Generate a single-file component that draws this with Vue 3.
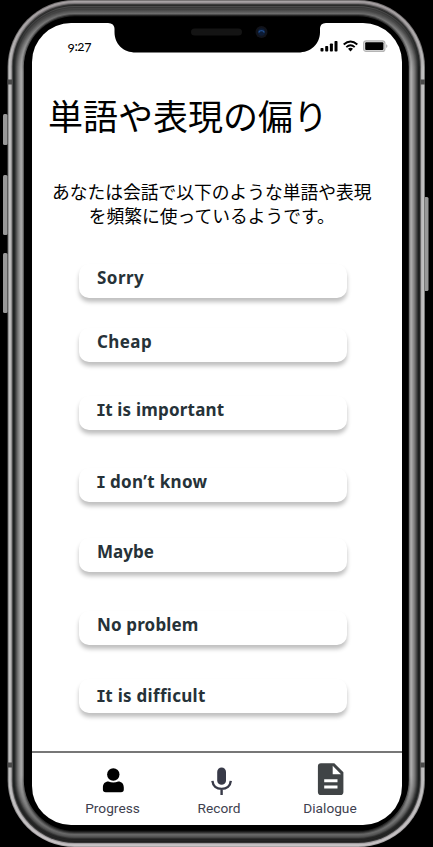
<script setup>
// Metal bands of the case, outermost first: inset, top, side and bottom shades
const bands = [
  [0, '#777374', '#777777', '#aaa6a8'],
  [1, '#a8a3a5', '#c2c2c2', '#c8c4c6'],
  [2, '#999496', '#bebebe', '#c2bec0'],
  [3, '#777375', '#b4b1b3', '#a19da0'],
  [4, '#3c3c3c', '#626262', '#333333'],
  [5, '#292929', '#222424', '#202020'],
  [6, '#4a4a4a', '#1d2020', '#252525'],
  [7, '#383838', '#323434', '#222222'],
  [8, '#444444', '#4a4a4a', '#303030'],
  [9, '#414141', '#626262', '#484848'],
  [10, '#4b4b4b', '#787878', '#565656'],
  [11, '#555555', '#8a8a8a', '#606060'],
  [12, '#5e5e5e', '#9a9a9a', '#656565'],
  [13, '#686868', '#aaaaaa', '#494949'],
  [14, '#454545', '#a0a0a0', '#292929'],
  [15, '#1b1b1b', '#777777', '#111111'],
  [16.2, '#000000', '#000000', '#000000']
].map(([inset, top, side, bottom]) => ({ inset, top, side, bottom }))

const phrases = [
  { lead: '', text: 'Sorry', kind: 'sorry' },
  { lead: '', text: 'Cheap', kind: 'cheap' },
  { lead: 'I', text: 't is important', kind: 'important' },
  { lead: 'I', text: ' don’t know', kind: 'unknown' },
  { lead: '', text: 'Maybe', kind: 'maybe' },
  { lead: '', text: 'No problem', kind: 'problem' },
  { lead: 'I', text: 't is difficult', kind: 'difficult' }
]
</script>

<template>
  <div class="phone">
    <svg class="case" viewBox="0 0 433 847" aria-hidden="true">
      <defs>
        <linearGradient v-for="(b, i) in bands" :id="'band' + i" :key="i" gradientUnits="userSpaceOnUse" x1="0" y1="0" x2="0" y2="847">
          <stop offset="0.012" :stop-color="b.top" />
          <stop offset="0.085" :stop-color="b.side" />
          <stop offset="0.915" :stop-color="b.side" />
          <stop offset="0.988" :stop-color="b.bottom" />
        </linearGradient>
      </defs>
      <g fill="#999">
        <rect x="3" y="114" width="4.500" height="31" rx="1.500" />
        <rect x="3" y="175" width="4.500" height="60" rx="1.500" />
        <rect x="3" y="253" width="4.500" height="60" rx="1.500" />
        <rect x="424" y="197" width="4.500" height="94" rx="1.500" />
      </g>
      <rect
        v-for="(b, i) in bands" :key="i"
        :x="7.6 + b.inset" :y="b.inset" :width="417.4 - 2 * b.inset" :height="847 - 2 * b.inset"
        :rx="67 - b.inset" :fill="`url(#band${i})`"
      />
      <g fill="#4a4a4a">
        <rect x="7.6" y="79.5" width="4.6" height="5" />
        <rect x="7.6" y="762.5" width="4.6" height="5" />
        <rect x="420.4" y="79.5" width="4.6" height="5" />
        <rect x="420.4" y="762.5" width="4.6" height="5" />
      </g>
    </svg>

    <main class="screen">
      <svg class="notch" viewBox="0 0 218 30" aria-hidden="true">
        <path d="M0 0C4 .3 6.500 2 6.500 6V9C6.500 21 15 29.500 28 29.500H190C203 29.500 212 21 212 9V6C212 2 214 .3 218 0Z" />
        <rect x="83" y="5.500" width="51" height="7" rx="3.500" fill="#141414" />
        <circle cx="153.500" cy="9" r="6" fill="#11131a" />
        <circle cx="153.500" cy="9" r="3.700" fill="#0c1b35" />
        <path d="M150.700 9.500A3 3 0 0 1 156.300 9.500" fill="none" stroke="#204d8c" stroke-width="1.400" />
      </svg>
      <header class="status">
        <span class="time">9:27</span>
        <div class="signals">
          <svg width="18" height="12" viewBox="0 0 18 12">
            <rect x=".5" y="8" width="3" height="3.500" rx=".8" />
            <rect x="5.200" y="6" width="3" height="5.500" rx=".8" />
            <rect x="9.900" y="3.500" width="3" height="8" rx=".8" />
            <rect x="14.500" y="1" width="3" height="10.500" rx=".8" />
          </svg>
          <svg width="15" height="12" viewBox="0 0 15 12" fill="none" stroke="#000" stroke-width="1.900">
            <path d="M.7 4.500Q7.500-1.700 14.300 4.500" />
            <path d="M3.300 7.100Q7.500 3.300 11.700 7.100" />
            <path d="M5 8.700Q7.500 6.900 10 8.700L7.500 11.400Z" fill="#000" stroke="none" />
          </svg>
          <svg width="25" height="12" viewBox="0 0 25 12">
            <rect x=".6" y=".8" width="21.300" height="10.600" rx="2.500" fill="#ddd" stroke="#b5b5b5" stroke-width="1.200" />
            <rect x="2.200" y="2.300" width="18.200" height="7.700" rx="1" />
            <path d="M23 4.200Q24.500 4.800 24.500 6.100Q24.500 7.500 23 8Z" fill="#bbb" />
          </svg>
        </div>
      </header>

      <h1 class="title">単語や表現の偏り</h1>
      <p class="intro">あなたは会話で以下のような単語や表現<br>を頻繁に使っているようです。</p>

      <ul class="phrases">
        <li v-for="p in phrases" :key="p.kind" class="card" :class="p.kind">
          <span class="label"><span v-if="p.lead" class="lead">{{ p.lead }}</span>{{ p.text }}</span>
        </li>
      </ul>

      <nav class="tabs">
        <a class="tab progress">
          <svg width="34" height="34" viewBox="0 0 34 34">
            <circle cx="17.300" cy="12.500" r="6.200" />
            <path d="M6.900 27.500V25.500C6.900 21.700 9 19.500 12.400 19.500Q17.300 21.600 22.200 19.500C25.600 19.500 27.800 21.700 27.800 25.500V27.500Q27.800 30.300 25 30.300H9.700Q6.900 30.300 6.900 27.500Z" />
          </svg>
          <span>Progress</span>
        </a>
        <a class="tab record">
          <svg width="34" height="34" viewBox="0 0 34 34" fill="#383a48">
            <rect x="15.200" y="5.500" width="8.800" height="17.300" rx="4.400" />
            <path d="M10.400 18.800C10.900 23.800 14.500 26.900 19.600 26.900S28.300 23.800 28.800 18.800M19.600 26.500V33" fill="none" stroke="#383a48" stroke-width="2.400" />
          </svg>
          <span>Record</span>
        </a>
        <a class="tab dialogue">
          <svg width="34" height="34" viewBox="-.8 .7 34 34" fill="#404446">
            <path fill-rule="evenodd" d="M7.200 2H20.500L29.600 11V30.700Q29.600 33.800 26.500 33.800H7.200Q4.100 33.800 4.100 30.700V5.100Q4.100 2 7.200 2ZM18.900 4.400V13H27.200ZM10.400 18V21H23.700V18ZM10.400 24.300V27.300H23.700V24.300Z" />
          </svg>
          <span>Dialogue</span>
        </a>
      </nav>
    </main>
  </div>
</template>

<style>
body { margin: 0; background: #000; }
</style>

<style scoped>
.phone {
  position: relative;
  box-sizing: border-box;
  width: 433px;
  height: 847px;
  padding: 23px 31.500px 22.500px 32px;
  overflow: hidden;
  background: #000;
}
.case { position: absolute; inset: 0; width: 433px; height: 847px; }
.screen {
  position: relative;
  display: flex;
  flex-direction: column;
  height: 801.500px;
  overflow: hidden;
  border-radius: 39px;
  background: #fff;
  color: #000;
}
.notch { position: absolute; left: 76px; top: 0; width: 218px; height: 30px; }
.status {
  display: flex;
  flex: none;
  justify-content: space-between;
  height: 52px;
  padding: 14px 14px 0 35.500px;
  box-sizing: border-box;
}
.time { font: 13.500px/18px Lato, sans-serif; font-variant-numeric: oldstyle-nums; letter-spacing: -.4px; }
.signals { display: flex; gap: 5px; padding-top: 3px; }
.title {
  margin: 14px 0 0 16px;
  font: 400 35px/52px "Noto Sans CJK JP", sans-serif;
  white-space: nowrap;
}
.intro {
  margin: 38px 0 0 -10px;
  font: 400 17.750px/24px "Noto Sans CJK JP", sans-serif;
  text-align: center;
  white-space: nowrap;
}
.phrases { margin: 36.500px 0 0 47px; padding: 0; width: 268px; list-style: none; }
.card {
  display: flex;
  align-items: center;
  box-sizing: border-box;
  height: 34px;
  padding: 0 0 6px 18px;
  border-radius: 10px;
  background: #fff;
  box-shadow: 0 4px 4px rgba(0, 0, 0, .25);
  color: #263238;
  font: 700 17px/24px "Noto Sans", sans-serif;
  white-space: nowrap;
}
.sorry { letter-spacing: .45px; }
.cheap { margin-top: 30px; letter-spacing: .4px; }
.important { margin-top: 34.500px; letter-spacing: .2px; }
.unknown { margin-top: 38px; letter-spacing: .33px; }
.maybe { margin-top: 36px; }
.problem { margin-top: 39px; letter-spacing: .15px; }
.difficult { margin-top: 34px; padding-bottom: 0; letter-spacing: .3px; }
.lead { margin: 0 -1px; font-family: "DejaVu Sans Mono", monospace; font-size: 16.500px; }
.tabs {
  display: grid;
  grid-template-columns: 107px 106px 116px;
  justify-content: start;
  height: 74px;
  margin-top: auto;
  padding-left: 27px;
  box-sizing: border-box;
  border-top: 2px solid #777;
}
.tab {
  display: flex;
  flex-direction: column;
  align-items: center;
  padding-top: 9px;
  color: #40414f;
  font: 13.700px/18px Roboto, sans-serif;
}
.tab span { margin-top: 3.500px; }
</style>
